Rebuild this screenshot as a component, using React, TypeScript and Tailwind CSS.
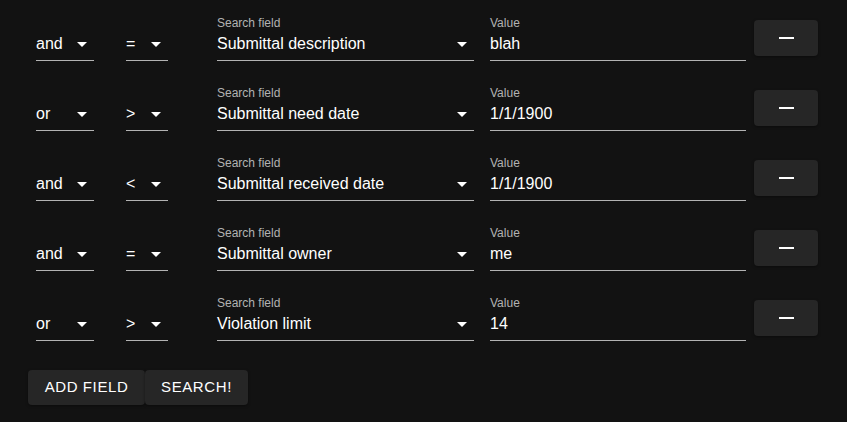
import React from "react";

const rows = [
  { op: "and", cmp: "=", field: "Submittal description", value: "blah" },
  { op: "or", cmp: ">", field: "Submittal need date", value: "1/1/1900" },
  { op: "and", cmp: "<", field: "Submittal received date", value: "1/1/1900" },
  { op: "and", cmp: "=", field: "Submittal owner", value: "me" },
  { op: "or", cmp: ">", field: "Violation limit", value: "14" },
];

function Arrow() {
  return (
    <svg width="24" height="24" viewBox="0 0 24 24" className="absolute right-0 top-[32px]">
      <path d="M7 10l5 5 5-5z" fill="#ffffff" />
    </svg>
  );
}

function SelectField({ label, value, width }: { label?: string; value: string; width: string }) {
  return (
    <div className={`relative flex flex-col pt-[16px] ${width}`}>
      <div className="relative top-[1px] h-[12px] text-[12px] leading-[12px] text-[#b3b3b3]">{label ?? ""}</div>
      <div className="border-b border-[#b3b3b3] pt-[4px] pb-[5px] text-[16px] leading-[23px] text-white">{value}</div>
      <Arrow />
    </div>
  );
}

function TextField({ label, value, width }: { label: string; value: string; width: string }) {
  return (
    <div className={`flex flex-col pt-[16px] ${width}`}>
      <div className="relative top-[1px] h-[12px] text-[12px] leading-[12px] text-[#b3b3b3]">{label}</div>
      <div className="border-b border-[#b3b3b3] pt-[4px] pb-[5px] text-[16px] leading-[23px] text-white">{value}</div>
    </div>
  );
}

export default function App() {
  return (
    <div
      className="w-[847px] h-[422px] bg-[#121212] pl-[28px]"
      style={{ fontFamily: '"Liberation Sans", Arial, sans-serif' }}
    >
      {rows.map((r, i) => (
        <div key={i} className="flex h-[70px]">
          <SelectField value={r.op} width="ml-[8px] w-[58px]" />
          <SelectField value={r.cmp} width="ml-[32px] w-[42px]" />
          <SelectField label="Search field" value={r.field} width="ml-[49px] w-[257px]" />
          <TextField label="Value" value={r.value} width="ml-[16px] w-[256px]" />
          <div className="ml-[8px] mt-[20px] flex h-[36px] w-[64px] items-center justify-center rounded-[4px] bg-[#262626] shadow-[0_1px_3px_rgba(0,0,0,0.4)]">
            <div className="h-[2px] w-[15px] bg-white" />
          </div>
        </div>
      ))}
      <div className="mt-[20px] flex">
        <div className="flex h-[35px] w-[117px] items-center justify-center rounded-[4px] bg-[#262626] text-[15px] tracking-[0.6px] text-white shadow-[0_1px_3px_rgba(0,0,0,0.4)]">
          ADD FIELD
        </div>
        <div className="flex h-[35px] w-[103px] items-center justify-center rounded-[4px] bg-[#262626] text-[15px] tracking-[0.6px] text-white shadow-[0_1px_3px_rgba(0,0,0,0.4)]">
          SEARCH!
        </div>
      </div>
    </div>
  );
}
